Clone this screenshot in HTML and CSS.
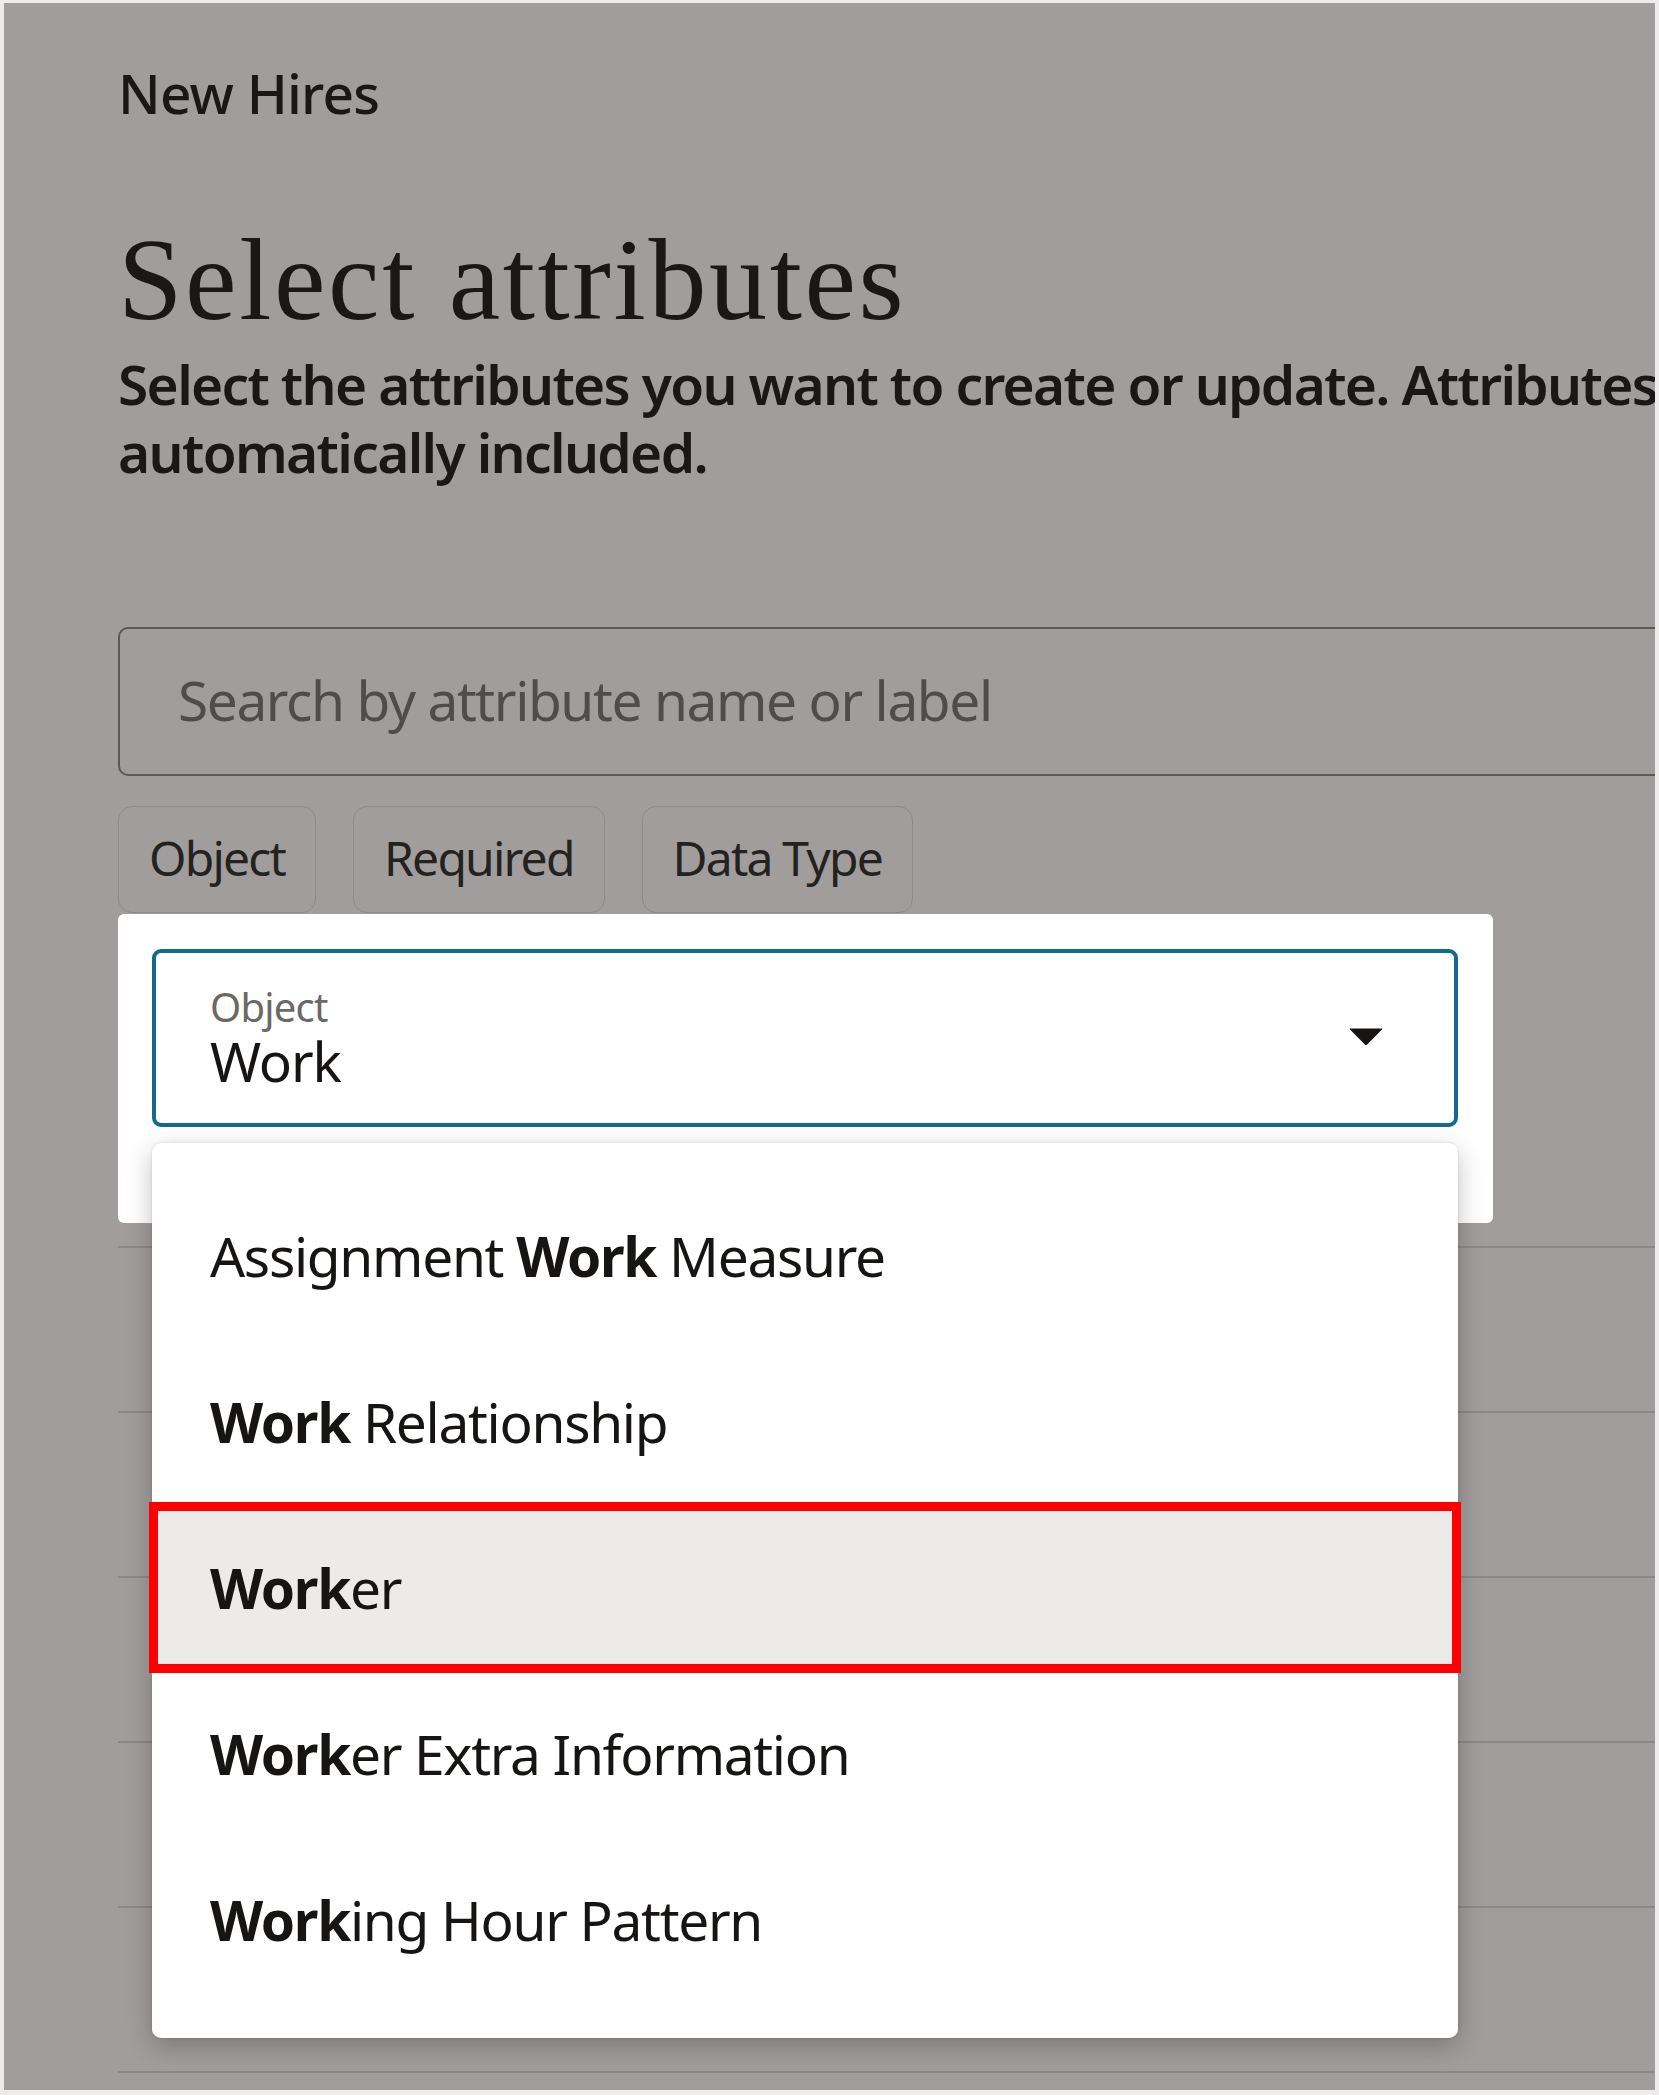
FILE: index.html
```html
<!DOCTYPE html>
<html lang="en">
<head>
<meta charset="utf-8">
<title>Select attributes</title>
<link rel="stylesheet" href="styles.css">
</head>
<body>
<div class="frame">
  <div class="page">
    <div class="crumb">New Hires</div>
    <h1 class="title">Select attributes</h1>
    <p class="subtitle">Select the attributes you want to create or update. Attributes<br>automatically included.</p>

    <div class="search"><span class="placeholder">Search by attribute name or label</span></div>

    <div class="chips">
      <span class="chip">Object</span>
      <span class="chip">Required</span>
      <span class="chip">Data Type</span>
    </div>

    <div class="popup-zone">
      <div class="card">
        <div class="field">
          <div class="field-text">
            <div class="field-label">Object</div>
            <div class="field-value">Work</div>
          </div>
          <svg class="caret" width="34" height="18" viewBox="0 0 34 18" aria-hidden="true">
            <path d="M1.5 0.5 H32.5 Q34 0.5 33 1.6 L18.2 16.6 Q17 17.6 15.8 16.6 L1 1.6 Q0 0.5 1.5 0.5 Z" fill="#161513"/>
          </svg>
        </div>
        <ul class="listbox">
          <li class="option">Assignment <b>Work</b> Measure</li>
          <li class="option"><b>Work</b> Relationship</li>
          <li class="option option-active"><b>Work</b>er<span class="annotation"></span></li>
          <li class="option"><b>Work</b>er Extra Information</li>
          <li class="option"><b>Work</b>ing Hour Pattern</li>
        </ul>
      </div>
      <div class="rows">
        <div class="row"></div>
        <div class="row"></div>
        <div class="row"></div>
        <div class="row"></div>
        <div class="row"></div>
        <div class="row"></div>
      </div>
    </div>
  </div>
</div>
</body>
</html>
```

FILE: styles.css
```css
* {
  box-sizing: border-box;
}

html, body {
  margin: 0;
  padding: 0;
  background: #ececec;
}

body {
  font-family: "Noto Sans", "Open Sans", sans-serif;
  color: #161513;
}

.frame {
  margin: 3px 4px 5px 4px;
  height: 2087px;
  background: #a19d9c;
  overflow: hidden;
}

.page {
  width: 1800px;
  padding: 52px 0 0 114px;
}

.crumb {
  font-size: 55px;
  line-height: 75px;
  height: 75px;
  font-weight: 500;
  letter-spacing: -0.8px;
  color: #1a1817;
}

.title {
  margin: 85px 0 0 0;
  font-family: "Liberation Serif", "Times New Roman", serif;
  font-weight: 400;
  font-size: 116px;
  line-height: 130px;
  height: 130px;
  letter-spacing: 2.6px;
  color: #1a1817;
}

.subtitle {
  margin: 5px 0 0 0;
  font-size: 55px;
  line-height: 68px;
  font-weight: 600;
  letter-spacing: -1.65px;
  white-space: nowrap;
  color: #1a1817;
}

.search {
  margin-top: 141px;
  width: 1700px;
  height: 149px;
  border: 2px solid #5b5856;
  border-radius: 10px;
  display: flex;
  align-items: center;
  padding-left: 58px;
}

.placeholder {
  font-size: 55px;
  letter-spacing: -1.4px;
  color: #4f4c4a;
  padding-bottom: 4px;
}

.chips {
  margin-top: 30px;
  display: flex;
  gap: 37px;
  height: 107px;
}

.chip {
  display: flex;
  align-items: center;
  height: 107px;
  padding: 0 30px 4px 30px;
  border: 1px solid #8e8a89;
  border-radius: 14px;
  font-size: 48px;
  letter-spacing: -1.8px;
  color: #242220;
}

.popup-zone {
  margin-top: 1px;
}

.card {
  position: relative;
  width: 1375px;
  height: 309px;
  padding: 35px 35px 0 34px;
  background: #ffffff;
  border-radius: 6px;
  z-index: 2;
}

.field {
  height: 178px;
  border: 4px solid #136a8c;
  border-radius: 9px;
  display: flex;
  align-items: center;
  padding: 0 71px 0 54px;
}

.field-text {
  flex: 1;
  align-self: flex-start;
  padding-top: 31px;
}

.field-label {
  font-size: 40px;
  line-height: 46px;
  letter-spacing: -0.8px;
  color: #6c6866;
}

.field-value {
  font-size: 55px;
  line-height: 62px;
  letter-spacing: -1.2px;
  color: #161513;
}

.caret {
  display: block;
  flex: none;
  margin-top: -2px;
}

.listbox {
  position: absolute;
  top: 229px;
  left: 34px;
  width: 1306px;
  margin: 0;
  padding: 30px 0 35px 0;
  list-style: none;
  background: #ffffff;
  border-radius: 9px;
  box-shadow: 0 8px 26px rgba(0, 0, 0, 0.24), 0 0 3px rgba(0, 0, 0, 0.12);
}

.option {
  position: relative;
  height: 166px;
  line-height: 166px;
  padding-left: 58px;
  font-size: 55px;
  letter-spacing: -1.3px;
  color: #161513;
  white-space: nowrap;
}

.option b {
  font-weight: 700;
}

.option-active {
  background: #ecebe9;
}

.annotation {
  position: absolute;
  top: -3px;
  left: -3px;
  right: -3px;
  bottom: -2px;
  border: 9px solid #ff0000;
  pointer-events: none;
}

.rows {
  margin-top: 23px;
  position: relative;
  z-index: 1;
}

.row {
  height: 165px;
  border-top: 2px solid #8c8887;
}
```
